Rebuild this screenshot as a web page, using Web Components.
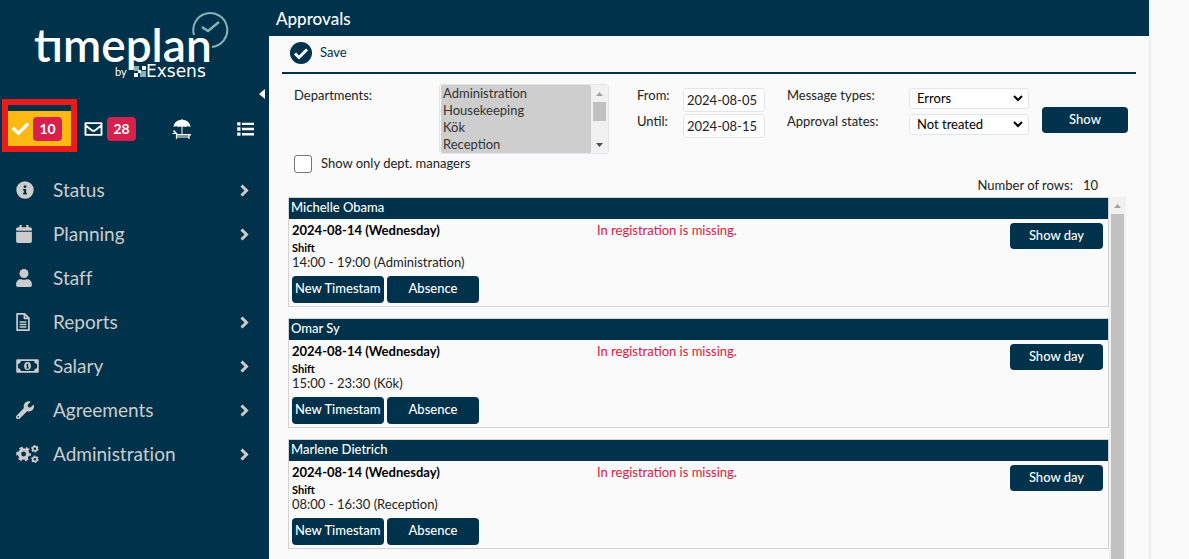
<!DOCTYPE html>
<html lang="en">
<head>
<meta charset="utf-8">
<title>Approvals</title>
<style>
html,body{height:100%;margin:0}
body{font-family:Lato,"Liberation Sans",sans-serif;font-size:13px;line-height:16px;color:#222;background:#fafafa;overflow:hidden}
</style>
</head>
<body>
<tp-app></tp-app>
<script>
const define = (name, html) => customElements.define(name, class extends HTMLElement {
  connectedCallback() {
    if (this.shadowRoot) return;
    const root = this.attachShadow({ mode: 'open' });
    root.innerHTML = typeof html === 'function' ? html(this) : html;
  }
});

const ICONS = {
  check: ['0 0 512 512', '<path d="M173.9 439.4l-166.4-166.4c-10-10-10-26.200 0-36.200l36.200-36.200c10-10 26.200-10 36.200 0L192 312.700 432.100 72.600c10-10 26.200-10 36.200 0l36.200 36.200c10 10 10 26.200 0 36.200l-294.400 294.400c-10 10-26.200 10-36.200 0z"/>'],
  mail: ['0 0 512 512', '<path fill="none" stroke="currentColor" stroke-width="54" stroke-linejoin="round" d="M28 90h456v332H28zM28 148c60 50 120 98 180 142 30 24 66 24 96 0 60-44 120-92 180-142"/>'],
  list: ['0 0 512 512', '<path d="M6 50h100v100H6zM6 206h100v100H6zM6 362h100v100H6zM150 64h362v72H150zM150 220h362v72H150zM150 376h362v72H150z"/>'],
  beach: ['0 0 20 20', '<path d="M1.500 8C2 3 6 1 9.500 .8V0h1v.8C14 1 18 3 18.500 8c-2-1-3.500-1-5 0-1.200-.8-2.300-.8-3.500 0-1.200-.8-2.300-.8-3.500 0-1.500-1-3-1-5 0zM9.500 7h1v8h-1z"/><path fill="none" stroke="currentColor" stroke-width="1.600" d="M1.500 11.500l4 4.200H19"/><path fill="none" stroke="currentColor" stroke-width="1.200" d="M.5 14.500h4M4.500 15.500V20M17 15.500V20M4.500 18H17"/>'],
  info: ['0 0 512 512', '<path fill-rule="evenodd" d="M256 8a248 248 0 1 0 0 496 248 248 0 0 0 0-496zm0 110a42 42 0 1 1 0 84 42 42 0 0 1 0-84zm56 254c0 7-5 12-12 12h-88c-7 0-12-5-12-12v-24c0-7 5-12 12-12h12v-64h-12c-7 0-12-5-12-12v-24c0-7 5-12 12-12h64c7 0 12 5 12 12v100h12c7 0 12 5 12 12z"/>'],
  calendar: ['0 0 448 512', '<path d="M12 192h424c7 0 12 5 12 12v260c0 26-22 48-48 48H48c-26 0-48-22-48-48V204c0-7 5-12 12-12zm436-44v-36c0-26-22-48-48-48h-48V12c0-7-5-12-12-12h-40c-7 0-12 5-12 12v52H160V12c0-7-5-12-12-12h-40c-7 0-12 5-12 12v52H48c-26 0-48 22-48 48v36c0 7 5 12 12 12h424c7 0 12-5 12-12z"/>'],
  user: ['0 0 448 512', '<circle cx="224" cy="128" r="128"/><path d="M314 288h-17c-45 21-101 21-146 0h-17C60 288 0 348 0 422v42c0 26 22 48 48 48h352c26 0 48-22 48-48v-42c0-74-60-134-134-134z"/>'],
  file: ['0 0 384 512', '<path fill="none" stroke="currentColor" stroke-width="48" stroke-linejoin="round" d="M24 24h216l120 120v344H24zM232 24v128h128"/><path d="M96 236h192v40H96zM96 308h192v40H96zM96 380h192v40H96z"/>'],
  money: ['0 0 640 512', '<path fill-rule="evenodd" d="M608 64H32C14 64 0 78 0 96v320c0 18 14 32 32 32h576c18 0 32-14 32-32V96c0-18-14-32-32-32zM130 112h380c0 46 36 82 82 82v124c-46 0-82 36-82 82H130c0-46-36-82-82-82V194c46 0 82-36 82-82z"/><ellipse cx="320" cy="256" rx="96" ry="112"/><path d="M280 326v-26h24v-62l-22 8v-28l34-24h24v106h24v26z" fill="#00324b"/>'],
  wrench: ['0 0 512 512', '<path fill-rule="evenodd" d="M507 117c-2-9-14-12-21-5l-74 74-68-11-11-68 74-74c7-7 4-19-5-21-49-12-103 1-141 39-41 41-52 100-35 151L19 410a64 64 0 0 0 91 91l208-208c51 17 110 6 151-34 38-38 51-92 38-142zM64 472a24 24 0 1 1 0-48 24 24 0 0 1 0 48z"/>'],
  cogs: ['0 0 640 512', '<g fill="none" stroke="currentColor"><circle cx="210" cy="256" r="116" stroke-width="92"/><circle cx="210" cy="256" r="178" stroke-width="64" stroke-dasharray="100 86.400" stroke-dashoffset="50"/><circle cx="530" cy="108" r="62" stroke-width="50"/><circle cx="530" cy="108" r="92" stroke-width="32" stroke-dasharray="52 44.300"/><circle cx="530" cy="404" r="62" stroke-width="50"/><circle cx="530" cy="404" r="92" stroke-width="32" stroke-dasharray="52 44.300"/></g>'],
  chevron: ['0 0 9 13', '<path d="M1.500 1.500l5 5-5 5" fill="none" stroke="currentColor" stroke-width="3"/>'],
  okcircle: ['0 0 22 22', '<circle cx="11" cy="11" r="11"/><path d="M5 11.500l4 4 8-8" fill="none" stroke="#fff" stroke-width="3"/>'],
  caret: ['0 0 6 10', '<path d="M6 0v10L0 5z"/>']
};
define('tp-icon', el => {
  const [box, body] = ICONS[el.getAttribute('name')];
  return `<style>:host{display:block;flex:none}svg{display:block;width:100%;height:100%;fill:currentColor}</style>
  <svg viewBox="${box}" aria-hidden="true">${body}</svg>`;
});

define('tp-logo', `<style>:host{display:block}svg{display:block;width:200px;height:72px}</style>
<svg viewBox="0 0 200 72" role="img" aria-label="timeplan by Exsens">
  <g fill="none" stroke="#86b4bc" stroke-width="2">
    <path d="M162 23A17 17 0 1 1 180 35"/><path d="M170 15l6 4 11-9" stroke-width="2.500"/>
  </g>
  <text x="2" y="50" font-family="Lato" font-size="46" font-weight="600" fill="#fff">tımeplan</text>
  <text x="83" y="64" font-family="Lato" font-size="11" fill="#fff">by</text>
  <g fill="#86b4bc"><path d="M102 54h5v5h-5zM108 59h6v6h-6z"/></g>
  <path fill="#fff" d="M110 54h4v4h-4zM102 61h4v4h-4zM106 58h3v3h-3z"/>
  <text x="114" y="65" font-family="DejaVu Sans" font-size="17" font-weight="400" fill="#fff">Exsens</text>
</svg>`);

define('tp-tab', el => `<style>
:host{display:block}
a{display:flex;align-items:center;height:35px;gap:4px;color:#fff;text-decoration:none;padding:0 4px}
:host([active]) a{background:#fdb913}
tp-icon{width:${el.getAttribute('w') || 18}px;height:${el.getAttribute('h') || 18}px}
b{display:block;background:#d6204e;border-radius:4px;font-size:14px;line-height:24px;width:29px;text-align:center}
</style><a href="#" aria-label="${el.getAttribute('label')}"><tp-icon name="${el.getAttribute('icon')}"></tp-icon>${el.hasAttribute('count') ? `<b>${el.getAttribute('count')}</b>` : ''}</a>`);

define('tp-nav-item', el => `<style>
:host{display:block}
a{display:flex;align-items:center;height:44px;padding:0 20px 0 16px;color:#ccc;text-decoration:none;font-size:19px;line-height:24px;font-variant-ligatures:none}
.i{width:37px;flex:none}
.i tp-icon{height:18px;width:${el.getAttribute('w')}px}
span{flex:1;padding-bottom:1px}
.c{width:9px;height:13px}
</style><a href="#"><div class="i"><tp-icon name="${el.getAttribute('icon')}"></tp-icon></div><span><slot></slot></span>${el.hasAttribute('leaf') ? '' : '<tp-icon class="c" name="chevron"></tp-icon>'}</a>`);

define('tp-sidebar', `<style>
:host{display:block;background:#00324b;padding-top:12px;box-sizing:border-box}
tp-logo{margin-left:32px}
.fold{display:flex;justify-content:flex-end;margin-top:5px;height:10px;padding-right:4px}
.fold button{border:0;background:none;padding:0;color:#fff;height:10px}
.fold tp-icon{width:6px;height:10px}
.tabs{display:grid;grid-template-columns:75px 63px 1fr 62px;height:53px;align-items:end;padding:0 11px 0 2px}
.mark{border:6px solid #e71d1d;height:41px;display:flex;flex-direction:column;justify-content:flex-end}
.tabs>tp-tab{padding-bottom:6px;justify-self:end}
nav{margin-top:16px}
</style>
<tp-logo></tp-logo>
<div class="fold"><button aria-label="Collapse menu"><tp-icon name="caret"></tp-icon></button></div>
<div class="tabs">
<div class="mark"><tp-tab active label="Approvals, 10" icon="check" w="17" count="10"></tp-tab></div>
<tp-tab label="Messages, 28" icon="mail" w="19" count="28"></tp-tab>
<tp-tab label="Leave" icon="beach" w="20" h="20"></tp-tab>
<tp-tab label="Lists" icon="list" w="17"></tp-tab>
</div>
<nav>
<tp-nav-item icon="info" w="18">Status</tp-nav-item>
<tp-nav-item icon="calendar" w="16">Planning</tp-nav-item>
<tp-nav-item icon="user" w="16" leaf>Staff</tp-nav-item>
<tp-nav-item icon="file" w="14">Reports</tp-nav-item>
<tp-nav-item icon="money" w="23">Salary</tp-nav-item>
<tp-nav-item icon="wrench" w="18">Agreements</tp-nav-item>
<tp-nav-item icon="cogs" w="23">Administration</tp-nav-item>
</nav>`);

define('tp-button', `<style>
:host{display:block}
button{display:block;box-sizing:border-box;width:100%;height:var(--h,26px);border:0;border-radius:4px;background:#00324b;color:#fff;font:500 13px/20px Lato,sans-serif;padding:0 3px 3px}
span{display:block;white-space:nowrap;overflow:hidden}
</style><button type="button"><span><slot></slot></span></button>`);

define('tp-scrollbar', `<style>
:host{display:flex;flex-direction:column;width:17px;background:#f1f1f1;align-items:center}
svg{display:block;width:7px;height:4px;margin:7px 0 6px;fill:#a3a3a3;flex:none}
i{display:block;width:13px;background:#c1c1c1;flex:1}
.dn{display:none}
:host([short]) i{flex:none;height:19px}
:host([short]) .dn{display:block;fill:#505050;margin-top:auto}
</style><svg viewBox="0 0 7 4"><path d="M0 4h7L3.500 0z"/></svg><i></i><svg class="dn" viewBox="0 0 7 4"><path d="M0 0h7L3.500 4z"/></svg>`);

define('tp-filters', `<style>
:host{display:block;padding:10px 8px 0 12px}
form{display:grid;grid-template-columns:145px 198px 46px 104px 122px 133px 86px;align-items:start}
label{line-height:16px;display:block}
.lab{display:grid;grid-auto-rows:26px;padding-top:3px}
.list{display:flex;width:167px;height:68px;border:1px solid #e2e6ec;border-radius:3px;overflow:hidden;padding-left:1px;background:#fff}
.list select{flex:1;border:0;padding:0;margin:0;height:68px;overflow:hidden;background:#cecece;font:inherit;outline:0;scrollbar-width:none}
option{height:17px;line-height:15px;min-height:17px;padding:0 2px;background:#cecece;color:#333;font-size:13px;box-sizing:border-box}
.dates,.sel{display:grid;gap:2px;padding-top:4px}
input[type=text]{box-sizing:border-box;width:82px;height:24px;border:1px solid #e2e6ec;border-radius:3px;padding:0 3px;font:13px Lato;color:#222;background:#fff}
.sel{gap:5px}
.drop{position:relative;width:120px}
.drop select{appearance:none;display:block;box-sizing:border-box;width:120px;height:21px;border:1px solid #e2e6ec;border-radius:3px;background:#fff;padding:0 7px 2px;font:13px Lato;color:#000}
.drop svg{position:absolute;right:6px;top:7px;width:10px;height:7px}
tp-button{margin-top:23px}
.only{display:flex;align-items:center;gap:9px;margin-top:1px}
.only label{padding-bottom:2px}
.only input{appearance:none;margin:0;width:18px;height:18px;border:1px solid #767676;border-radius:3px;background:#fff}
</style>
<form>
<div class="lab"><label for="dep">Departments:</label></div>
<div class="list"><select id="dep" multiple size="4"><option>Administration</option><option>Housekeeping</option><option>Kök</option><option>Reception</option></select><tp-scrollbar short></tp-scrollbar></div>
<div class="lab"><label for="from">From:</label><label for="until">Until:</label></div>
<div class="dates"><input type="text" id="from" value="2024-08-05"><input type="text" id="until" value="2024-08-15"></div>
<div class="lab"><label for="mt">Message types:</label><label for="as">Approval states:</label></div>
<div class="sel">
<div class="drop"><select id="mt"><option>Errors</option></select><svg viewBox="0 0 10 7"><path d="M1 1l4 4 4-4" fill="none" stroke="#000" stroke-width="2"/></svg></div>
<div class="drop"><select id="as"><option>Not treated</option></select><svg viewBox="0 0 10 7"><path d="M1 1l4 4 4-4" fill="none" stroke="#000" stroke-width="2"/></svg></div>
</div>
<tp-button>Show</tp-button>
</form>
<div class="only"><input type="checkbox" id="only"><label for="only">Show only dept. managers</label></div>`);

define('tp-approval', el => `<style>
:host{display:block;border:1px solid #d3d3d3}
h2{margin:0;background:#00324b;color:#fff;font:500 13px/19px Lato;padding:0 2px 2px}
.row{display:grid;grid-template-columns:305px 1fr 93px;padding:3px 5px 3px 3px}
.row>tp-button{margin-top:1px}
.date{font-weight:700;line-height:16px;color:#000}
.shift{font-weight:700;font-size:11px;line-height:16px;color:#000;margin-top:2px}
.time{line-height:14px;margin-top:-1px}
.err{color:#d8203e;line-height:16px}
.btns{display:grid;grid-template-columns:92px 92px;gap:3px;margin-top:7px;--h:27px}
</style><h2>${el.getAttribute('name')}</h2>
<div class="row"><div><div class="date">2024-08-14 (Wednesday)</div><div class="shift">Shift</div><div class="time">${el.getAttribute('time')}</div>
<div class="btns"><tp-button>New Timestamp</tp-button><tp-button>Absence</tp-button></div></div>
<div class="err">In registration is missing.</div><tp-button>Show day</tp-button></div>`);

define('tp-app', `<style>
:host{display:grid;grid-template-columns:269px 1fr 38px;height:100vh;overflow:hidden}
main{display:flex;flex-direction:column;min-width:0;min-height:0;border-right:2px solid #f0f0f0}
h1{margin:0;background:#00324b;color:#fff;font:500 17px/36px Lato;padding:1px 7px 0;height:35px}
.save{margin:0 13px;border-bottom:2px solid #00324b;height:36px;display:flex;align-items:center}
.save button{display:flex;align-items:center;gap:8px;border:0;background:none;font:13px Lato;color:#00324b;padding:0 8px 2px}
.save tp-icon{width:22px;height:22px}
.save span{padding-bottom:3px}
tp-filters{margin:0 13px}
.count{display:flex;justify-content:flex-end;gap:10px;padding:4px 51px 4px}
.area{display:flex;margin:0 23px 0 19px;flex:1;min-height:0}
.rows{flex:1;display:flex;flex-direction:column;gap:11px;overflow:hidden}
.rows>*{flex:none}
</style>
<tp-sidebar></tp-sidebar>
<main>
<h1>Approvals</h1>
<div class="save"><button type="button"><tp-icon name="okcircle"></tp-icon><span>Save</span></button></div>
<tp-filters></tp-filters>
<div class="count"><span>Number of rows:</span><span>10</span></div>
<div class="area"><div class="rows">
<tp-approval name="Michelle Obama" time="14:00 - 19:00 (Administration)"></tp-approval>
<tp-approval name="Omar Sy" time="15:00 - 23:30 (Kök)"></tp-approval>
<tp-approval name="Marlene Dietrich" time="08:00 - 16:30 (Reception)"></tp-approval>
</div><tp-scrollbar></tp-scrollbar></div>
</main>`);
</script>
</body>
</html>
